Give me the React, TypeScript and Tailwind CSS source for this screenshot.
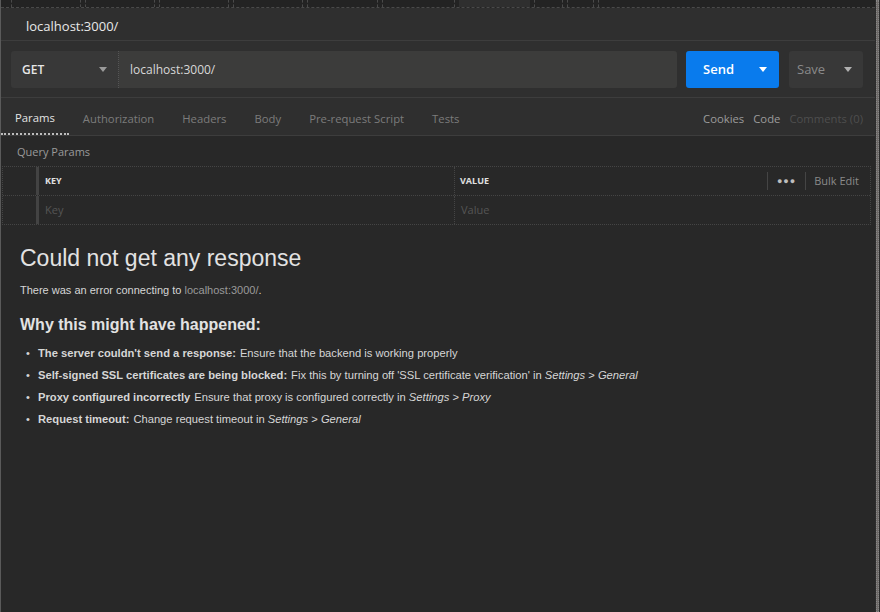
import React from 'react';

const Caret: React.FC<{ className?: string }> = ({ className }) => (
  <svg width="8" height="5" viewBox="0 0 8 5" className={className}>
    <path d="M0 0h8L4 5z" fill="currentColor" />
  </svg>
);

const topTabs = [
  { w: 'w-[70px]', active: false },
  { w: 'w-[70px]', active: false },
  { w: 'w-[70px]', active: false },
  { w: 'w-[70px]', active: false },
  { w: 'w-[71px]', active: false },
  { w: 'w-[73px]', active: false },
  { w: 'w-[71px]', active: true },
  { w: 'w-[29px]', active: false },
  { w: 'w-[27px]', active: false },
];

const reqTabs = ['Params', 'Authorization', 'Headers', 'Body', 'Pre-request Script', 'Tests'];

const App: React.FC = () => {
  return (
    <div className="w-[880px] h-[612px] overflow-hidden flex bg-[#282828] font-['Open_Sans',sans-serif]">
      <div className="flex-1 flex flex-col border-l border-[#5a5a5a] min-w-0">
        {/* tab strip */}
        <div className="h-[8px] flex gap-[4px] pl-[10px] bg-[#232323] border-b border-dashed border-[#4a4a4a]">
          {topTabs.map((t, i) => (
            <div
              key={i}
              className={`${t.w} h-full border-x border-dashed ${
                t.active ? 'bg-[#2f2f2f] border-transparent' : 'bg-[#232323] border-[#4a4a4a]'
              }`}
            />
          ))}
          <div className="flex-1 h-full border-l border-dashed border-[#4a4a4a]" />
        </div>

        {/* request name */}
        <div className="h-[33px] bg-[#2f2f2f] flex items-center pl-[25px] pt-[5px] text-[13px] text-[#e8e8e8] border-b border-[#3d3d3d]">
          localhost:3000/
        </div>

        {/* url bar */}
        <div className="h-[57px] bg-[#2f2f2f] flex items-center pl-[10px] pr-[12px] pt-[1px] border-b border-[#3d3d3d]">
          <div className="flex flex-1 h-[37px] rounded-[3px] overflow-hidden">
            <div className="w-[108px] bg-[#383838] flex items-center justify-between pl-[11px] pr-[11px] text-[12px] font-semibold text-[#e6e6e6] border-r border-dotted border-[#555]">
              GET
              <Caret className="text-[#9a9a9a]" />
            </div>
            <div className="flex-1 bg-[#3c3c3b] flex items-center pl-[11px] text-[12px] text-[#d8d8d8]">
              localhost:3000/
            </div>
          </div>
          <div className="ml-[9px] w-[93px] h-[37px] rounded-[3px] bg-[#097bed] flex items-center justify-between pl-[17px] pr-[12px] text-[13px] font-semibold text-white">
            Send
            <Caret className="text-white" />
          </div>
          <div className="ml-[10px] w-[74px] h-[37px] rounded-[3px] bg-[#383838] flex items-center justify-between pl-[8px] pr-[11px] text-[13px] text-[#8a8a8a]">
            Save
            <Caret className="text-[#b0b0b0]" />
          </div>
        </div>

        {/* request tabs */}
        <div className="h-[38px] bg-[#2f2f2f] flex items-stretch border-b border-[#3d3d3d] pr-[12px]">
          {reqTabs.map((t, i) => (
            <div
              key={t}
              className={`flex items-center px-[14px] pt-[6px] text-[11.3px] ${
                i === 0
                  ? 'text-[#e4e4e4] border-b-2 border-dotted border-[#bdbdbd]'
                  : 'text-[#7c7c7c]'
              }`}
            >
              {t}
            </div>
          ))}
          <div className="flex-1" />
          <div className="flex items-center gap-[9px] text-[11.3px] pt-[6px]">
            <span className="text-[#9c9c9c]">Cookies</span>
            <span className="text-[#9c9c9c]">Code</span>
            <span className="text-[#4e4e4e]">Comments (0)</span>
          </div>
        </div>

        {/* query params */}
        <div className="h-[30px] flex items-center pl-[16px] pt-[2px] text-[11px] text-[#9a9a9a]">Query Params</div>
        <div className="ml-[1px] mr-[4px] border border-dotted border-[#454545]">
          <div className="h-[29px] flex border-b border-dotted border-[#454545]">
            <div className="w-[36px] border-r-[3px] border-[#434343]" />
            <div className="w-[416px] flex items-center pl-[6px] text-[9px] font-bold text-[#e0e0e0] border-r border-dotted border-[#454545]">
              KEY
            </div>
            <div className="flex-1 flex items-center pl-[5px] text-[9px] font-bold text-[#e0e0e0]">VALUE</div>
            <div className="flex items-center h-full">
              <div className="w-px h-[18px] bg-[#454545]" />
              <div className="px-[9px] text-[#bdbdbd] text-[9px] tracking-[1px]">●●●</div>
              <div className="w-px h-[18px] bg-[#454545]" />
              <div className="pl-[8px] pr-[11px] text-[11px] text-[#8a8a8a]">Bulk Edit</div>
            </div>
          </div>
          <div className="h-[28px] flex">
            <div className="w-[36px] border-r-[3px] border-[#434343]" />
            <div className="w-[416px] flex items-center pl-[6px] text-[11px] text-[#555] border-r border-dotted border-[#454545]">
              Key
            </div>
            <div className="flex-1 flex items-center pl-[6px] text-[11px] text-[#555]">Value</div>
          </div>
        </div>

        {/* response */}
        <div className="pl-[19px] pt-[19px] font-['Liberation_Sans',Arial,sans-serif] text-[#d6d6d6]">
          <h1 className="text-[23px] leading-[28px] text-[#e2e2e2]">Could not get any response</h1>
          <p className="mt-[10px] text-[11px]">
            There was an error connecting to <span className="text-[#9a9a9a]">localhost:3000/</span>.
          </p>
          <h2 className="mt-[14px] text-[16px] font-bold text-[#e2e2e2]">Why this might have happened:</h2>
          <ul className="mt-[9px] pl-[6px] text-[11.2px] flex flex-col gap-[8px]">
            <li className="flex items-center leading-[14px]">
              <span className="w-[12px] text-[11px]">•</span>
              <b className="mr-[4px]">The server couldn't send a response:</b>
              Ensure that the backend is working properly
            </li>
            <li className="flex items-center leading-[14px]">
              <span className="w-[12px] text-[11px]">•</span>
              <b className="mr-[4px]">Self-signed SSL certificates are being blocked:</b>
              Fix this by turning off 'SSL certificate verification' in&nbsp;<i>Settings</i>&nbsp;&gt;&nbsp;<i>General</i>
            </li>
            <li className="flex items-center leading-[14px]">
              <span className="w-[12px] text-[11px]">•</span>
              <b className="mr-[4px]">Proxy configured incorrectly</b>
              Ensure that proxy is configured correctly in&nbsp;<i>Settings</i>&nbsp;&gt;&nbsp;<i>Proxy</i>
            </li>
            <li className="flex items-center leading-[14px]">
              <span className="w-[12px] text-[11px]">•</span>
              <b className="mr-[4px]">Request timeout:</b>
              Change request timeout in&nbsp;<i>Settings</i>&nbsp;&gt;&nbsp;<i>General</i>
            </li>
          </ul>
        </div>
      </div>
      {/* scrollbar */}
      <div className="w-[5px] bg-[#2c2c2c] flex justify-center">
        <div className="w-[3px] h-full bg-[#6e6a68] border-x border-dotted border-[#888]" />
      </div>
    </div>
  );
};

export default App;
